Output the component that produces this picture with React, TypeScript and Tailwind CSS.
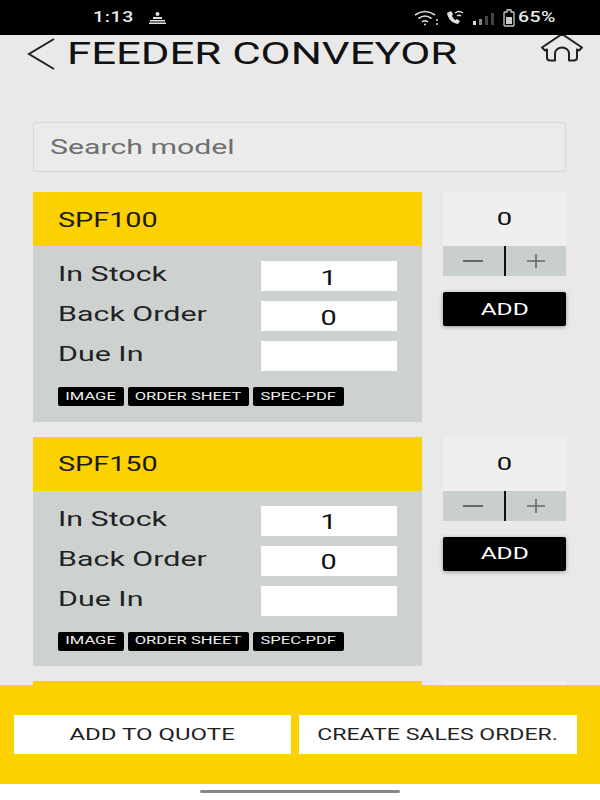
import React from "react";

function Wide({ children, className = "", scale = "scale-x-[1.44]" }: { children: React.ReactNode; className?: string; scale?: string }) {
  return <span className={`inline-block whitespace-nowrap ${scale} ${className}`}>{children}</span>;
}

function Field({ label, value }: { label: string; value: string }) {
  return (
    <div className="flex items-center justify-between h-[30px]">
      <Wide scale="scale-x-[1.52]" className="origin-left text-[20px] leading-[26px] text-[#222] -mt-[4px]">{label}</Wide>
      <div className="w-[136px] h-[30px] bg-white flex items-center justify-center text-[20px] text-[#111] pt-[3px]">
        <Wide>{value}</Wide>
      </div>
    </div>
  );
}

function Tag({ w, children }: { w: string; children: string }) {
  return (
    <div className={`${w} h-[19px] bg-black rounded-[2px] flex items-center justify-center text-[#eeeeee] text-[11.5px]`}>
      <Wide>{children}</Wide>
    </div>
  );
}

function Side() {
  return (
    <div className="w-[123px] flex flex-col">
      <div className="h-[54px] bg-[#efefef] flex items-center justify-center text-[19px] text-[#111] pt-[1px]">
        <Wide>0</Wide>
      </div>
      <div className="h-[30px] bg-[#c9cfce] flex items-center">
        <div className="flex-1 flex items-center justify-center">
          <div className="w-[20px] h-[2px] bg-[#666]" />
        </div>
        <div className="w-[2px] h-[30px] bg-[#111]" />
        <div className="flex-1 flex items-center justify-center">
          <svg width="20" height="20" viewBox="0 0 20 20" stroke="#666" strokeWidth="1.6"><path d="M1 10h18M10 3v14" /></svg>
        </div>
      </div>
      <div className="mt-[16px] h-[34px] bg-black rounded-[2px] shadow-[0_1px_4px_rgba(0,0,0,0.35)] flex items-center justify-center text-white text-[17px] pt-[1px]">
        <Wide>ADD</Wide>
      </div>
    </div>
  );
}

function Card({ name }: { name: string }) {
  return (
    <div className="flex justify-between shrink-0">
      <div className="w-[389px] h-[229.5px] bg-[#cdd2d1] flex flex-col">
        <div className="h-[54px] bg-[#fdd100] flex items-center pl-[25px] pt-[1px]">
          <Wide className="origin-left text-[20px] text-[#1a1a1a]">{name}</Wide>
        </div>
        <div className="px-[25px] pt-[15px] flex flex-col gap-[10px]">
          <Field label="In Stock" value="1" />
          <Field label="Back Order" value="0" />
          <Field label="Due In" value="" />
        </div>
        <div className="flex gap-[4px] pl-[25px] mt-[16px]">
          <Tag w="w-[66px]">IMAGE</Tag>
          <Tag w="w-[121px]">ORDER SHEET</Tag>
          <Tag w="w-[91px]">SPEC-PDF</Tag>
        </div>
      </div>
      <Side />
    </div>
  );
}

export default function App() {
  return (
    <div className="w-[600px] h-[800px] flex flex-col overflow-hidden bg-[#e9e9e9] font-['Roboto',sans-serif]">
      <div className="h-[35px] bg-black flex items-center pl-[93px] text-[#e8e8e8] shrink-0">
        <span className="w-[31px] origin-left scale-x-[1.3] text-[15px] font-medium tracking-[0.5px]">1:13</span>
        <svg className="ml-[25px]" width="17" height="12" viewBox="0 0 17 12" fill="#e0e0e0">
          <circle cx="8.5" cy="2" r="2" />
          <rect x="4" y="5" width="9" height="2" />
          <rect x="1" y="8" width="15" height="1.5" />
          <rect x="0" y="10.5" width="17" height="1.5" />
        </svg>
        <svg className="ml-[248px]" width="25" height="16" viewBox="0 0 25 16" fill="none" stroke="#e0e0e0" strokeWidth="1.6">
          <path d="M1 5q10-7 20 0M4.500 8.500q6.500-5 13 0M8 12q3-2.500 6 0" />
          <circle cx="11" cy="14.500" r="1" fill="#e0e0e0" stroke="none" />
          <circle cx="23" cy="10" r="1" fill="#e0e0e0" stroke="none" />
          <circle cx="23" cy="14" r="1" fill="#e0e0e0" stroke="none" />
        </svg>
        <svg className="ml-[6px]" width="20" height="16" viewBox="0 0 20 16" fill="none" stroke="#e0e0e0">
          <path d="M2 3c1 6 5 10 11 11l2-3-3-2-2 1c-1-1-2-2-3-4l1-2-2-3z" fill="#e0e0e0" stroke="none" />
          <path d="M10 3q4-3 8 0M12 6q2-1.500 4 0" strokeWidth="1.300" />
        </svg>
        <svg className="ml-[8px]" width="24" height="14" viewBox="0 0 24 14">
          <rect x="0" y="10" width="3" height="4" fill="#e0e0e0" />
          <rect x="6" y="8" width="3" height="6" fill="#888" />
          <rect x="12" y="5" width="3" height="9" fill="#444" />
          <rect x="18" y="2" width="3" height="12" fill="#444" />
        </svg>
        <svg className="ml-[6px]" width="12" height="18" viewBox="0 0 12 18" fill="none">
          <path d="M4 1h4v2h2a1 1 0 0 1 1 1v12a1 1 0 0 1-1 1H2a1 1 0 0 1-1-1V4a1 1 0 0 1 1-1h2z" stroke="#ccc" strokeWidth="1.300" />
          <rect x="3" y="8" width="6" height="7" fill="#ccc" />
        </svg>
        <span className="ml-[3px] w-[30px] origin-left scale-x-[1.3] text-[15px] font-medium tracking-[0.3px]">65%</span>
      </div>

      <div className="flex-1 min-h-0 overflow-hidden pl-[33px] pr-[34px] relative">
        <div className="h-[87px] relative">
          <div className="flex items-center h-[38px] -ml-[6px]">
            <svg width="29" height="32" viewBox="0 0 29 32" fill="none" stroke="#222" strokeWidth="2">
              <path d="M27 1 2 16l25 15" />
            </svg>
            <Wide scale="scale-x-[1.41]" className="origin-left ml-[11px] text-[31px] leading-[36px] text-[#111] font-normal">FEEDER CONVEYOR</Wide>
          </div>
          <svg className="absolute right-[-18px] top-[-2px]" width="44" height="30" viewBox="0 0 44 30" fill="none" stroke="#222" strokeWidth="2" strokeLinejoin="round">
            <path d="M22 1 2 14.500l3 3 2-1v8a3 3 0 0 0 3 3h5v-7a7 6 0 0 1 14 0v7h5a3 3 0 0 0 3-3v-8l2 1 3-3z" />
          </svg>
        </div>
        <div className="h-[50px] rounded-[3px] border border-[#d5d8d8] bg-[#ebebeb] flex items-center pl-[16px] pt-[2px]">
          <Wide className="origin-left text-[21px] text-[#6f6f6f]">Search model</Wide>
        </div>
        <div className="mt-[20px] flex flex-col gap-[15px]">
          <Card name="SPF100" />
          <Card name="SPF150" />
          <div className="flex justify-between shrink-0">
            <div className="w-[389px] h-[54px] bg-[#fdd100]" />
            <div className="w-[123px] h-[54px] bg-[#efefef]" />
          </div>
        </div>
      </div>

      <div className="h-[99px] bg-[#fdd100] shrink-0 flex items-center pl-[14px] gap-[8px]">
        <div className="w-[277px] h-[39px] bg-white flex items-center justify-center text-[16px] text-[#222]">
          <Wide scale="scale-x-[1.5]">ADD TO QUOTE</Wide>
        </div>
        <div className="w-[278px] h-[39px] bg-white flex items-center justify-center text-[16px] text-[#222]">
          <Wide>CREATE SALES ORDER.</Wide>
        </div>
      </div>
      <div className="h-[16px] bg-white shrink-0 flex justify-center pt-[6px]">
        <div className="w-[200px] h-[3px] rounded-full bg-[#85858c]" />
      </div>
    </div>
  );
}
